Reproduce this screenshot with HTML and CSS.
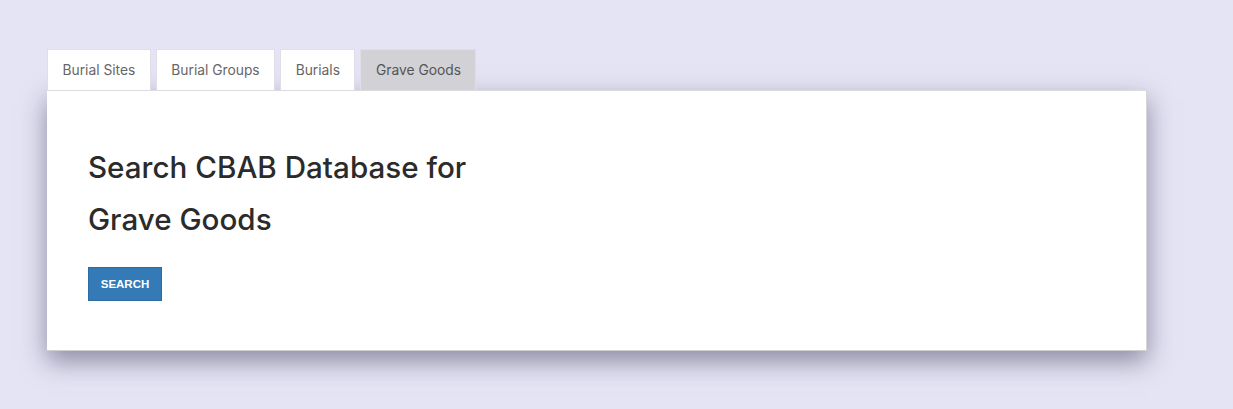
FILE: index.html
```html
<!DOCTYPE html>
<html>
<head>
<meta charset="utf-8">
<link rel="stylesheet" href="styles.css">
</head>
<body>
<div class="wrap">
  <div class="tabs">
    <div class="tab">Burial Sites</div>
    <div class="tab">Burial Groups</div>
    <div class="tab">Burials</div>
    <div class="tab active">Grave Goods</div>
  </div>
  <div class="panel">
    <h1 class="title">Search CBAB Database for<br>Grave Goods</h1>
    <button class="btn">Search</button>
  </div>
</div>
</body>
</html>
```
FILE: styles.css
```css
html, body {
  margin: 0;
  padding: 0;
  background: #e5e4f4;
  font-family: Inter, "Open Sans", sans-serif;
}
body {
  min-height: 409px;
}
.wrap {
  padding: 49px 0 58px 47px;
  width: 1100px;
}
.tabs {
  display: flex;
  gap: 5px;
  height: 41px;
}
.tab {
  box-sizing: border-box;
  height: 41px;
  padding: 0 14.5px;
  display: flex;
  align-items: center;
  background: #fff;
  border: 1px solid #dedde8;
  border-bottom: none;
  font-size: 13.8px;
  color: #666;
}
.tab.active {
  background: #d1d1d6;
  color: #555;
}
.panel {
  background: #fff;
  border-top: 1px solid #dcdce0;
  border-right: 1px solid #d6d6da;
  border-bottom: 1px solid #d0d0d4;
  height: 261px;
  box-sizing: border-box;
  padding: 50px 41px 0;
  box-shadow: 0 10px 24px rgba(50, 50, 80, 0.5);
}
.title {
  margin: 0 0 22px;
  font-size: 29.6px;
  font-weight: 450;
  line-height: 52px;
  color: #2b2b2b;
}
.btn {
  display: block;
  height: 34px;
  width: 74px;
  padding: 0;
  background: #337ab7;
  border: 1px solid #2e6da4;
  color: #fff;
  font-family: "Liberation Sans", Arial, sans-serif;
  font-weight: bold;
  font-size: 11.5px;
  text-transform: uppercase;
  cursor: pointer;
}
```
